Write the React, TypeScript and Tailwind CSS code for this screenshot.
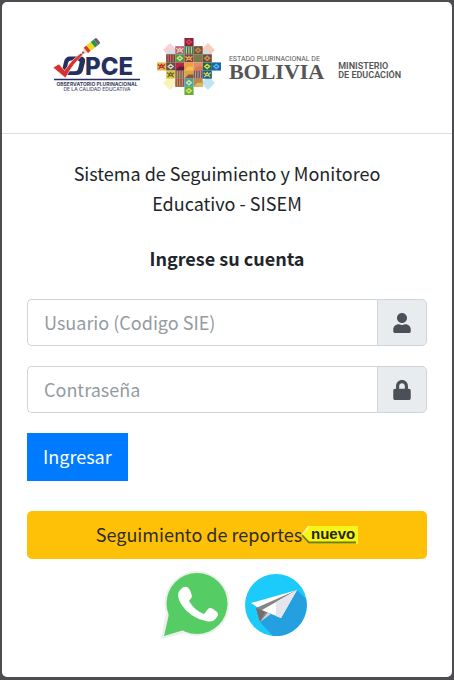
import React from "react";
import { FaLock, FaUser } from "react-icons/fa";

function OpceLogo() {
  return (
    <svg viewBox="0 0 90 56" className="h-[56px] w-[90px] shrink-0" role="img" aria-label="OPCE">
      <path d="M17 18.500H27Q33 18.500 32 24L30 32Q29 37 23 37H14Q8 37 9 32L11 24Q12 18.500 17 18.500ZM18 22.500Q15.500 22.500 15 25L13.800 31Q13.500 33.200 16 33.200H22Q24.500 33.200 25 31L26.500 25Q27 22.500 24.500 22.500Z" fillRule="evenodd" fill="#26305f" />
      <path d="M0 29.500 6 26 11.500 32.500Q18 22 28 15L30 16.500Q19 27 12.500 40Z" fill="#d9302f" stroke="#fff" strokeWidth="0.600" />
      <g transform="translate(29 15.500) rotate(-39)">
        <path d="M0 0 5-3.500V3.500Z" fill="#f1d9ae" />
        <path d="M0 0 2-1.400V1.400Z" fill="#333" />
        <path d="M5-3.500H8.500V3.500H5Z" fill="#d83a2c" />
        <path d="M8.500-3.500H14V3.500H8.500Z" fill="#f0d91f" />
        <path d="M14-3.500H18V3.500H14Z" fill="#2f9448" />
        <path d="M18-3.500H19.500Q21-3.500 21-2V2Q21 3.500 19.500 3.500H18Z" fill="#705a70" />
      </g>
      <text x="32" y="37" fontSize="24" fontWeight="800" fill="#26305f" className="font-['Inter',sans-serif]">PCE</text>
      <path d="M1 41.500H87" stroke="#26305f" strokeWidth="1.300" />
      <text x="44" y="48" textAnchor="middle" fontSize="5" fontWeight="700" fill="#343b62" className="font-['Inter',sans-serif]">OBSERVATORIO PLURINACIONAL</text>
      <text x="44" y="53" textAnchor="middle" fontSize="5" fontWeight="500" fill="#4b5070" className="font-['Inter',sans-serif]">DE LA CALIDAD EDUCATIVA</text>
    </svg>
  );
}

type Tile = [col: number, row: number, base: string, accent: string, motif: number];

const tiles: Tile[] = [
  [3, 0, "#8e2034", "#d0485a", 0],
  [2, 1, "#b7657c", "#e9d3ae", 1],
  [3, 1, "#387b55", "#d9c6a0", 2],
  [4, 1, "#7d5036", "#b98d51", 0],
  [1, 2, "#82364a", "#c58a49", 2],
  [2, 2, "#4d9a4b", "#d7dd8b", 0],
  [3, 2, "#8c3a42", "#d8b04c", 1],
  [4, 2, "#4e8a52", "#d2543f", 2],
  [5, 2, "#7d4a37", "#c2985d", 0],
  [0, 3, "#e6b84b", "#b9292b", 1],
  [1, 3, "#5d5148", "#dfd5c3", 0],
  [2, 3, "#b52743", "#5d1d34", 3],
  [3, 3, "#ee9d3d", "#f6bd54", 3],
  [4, 3, "#e68a66", "#e0784f", 3],
  [5, 3, "#22694a", "#d8dc4c", 0],
  [6, 3, "#1763a9", "#59b6df", 0],
  [1, 4, "#e2c93c", "#5c643b", 1],
  [2, 4, "#826051", "#c5a27d", 2],
  [3, 4, "#dba43e", "#8f5438", 3],
  [4, 4, "#75566b", "#c49c76", 2],
  [5, 4, "#175f8f", "#e1d34e", 1],
  [2, 5, "#91503f", "#d29b5e", 2],
  [3, 5, "#37a6b8", "#e4e28b", 0],
  [4, 5, "#bf8a41", "#e0b869", 3],
  [3, 6, "#66ab3d", "#dce24b", 0],
];

function Motif({ kind, color }: { kind: number; color: string }) {
  if (kind === 0)
    return <path d="M4.500 1 8 4 4.500 7 1 4ZM4.500 3 3 4 4.500 5 6 4Z" fillRule="evenodd" fill={color} />;
  if (kind === 1)
    return <path d="M1 2 3 4 4.500 2 6 4 8 2M1.500 6.500 3 5H6L7.500 6.500" fill="none" stroke={color} strokeWidth="1.200" />;
  if (kind === 2) return <path d="M2 .5V7.500M4.500 .5V7.500M7 .5V7.500" stroke={color} strokeWidth="1" />;
  return <path d="M0 8 4 4H9V8Z" fill={color} />;
}

function ChakanaLogo() {
  return (
    <svg viewBox="0 0 64 57" className="h-[57px] w-[64px] shrink-0" aria-hidden="true">
      <path d="M13 5 20 12 13 19 6 12Z" fill="#f8d1d2" />
      <path d="M51 5 58 12 51 19 44 12Z" fill="#f8ccbf" />
      <path d="M13 38 20 45 13 52 6 45Z" fill="#f8f3b7" />
      <path d="M51 38 58 45 51 52 44 45Z" fill="#c1e5ef" />
      <path d="M9 17 15 11 21 17ZM43 17 49 11 55 17Z" fill="#c8e3e4" />
      {tiles.map(([col, row, base, accent, motif]) => (
        <g key={`${col}-${row}`} transform={`translate(${col * 9.14} ${row * 8.14})`}>
          <rect width="9.140" height="8.140" fill={base} />
          <Motif kind={motif} color={accent} />
        </g>
      ))}
    </svg>
  );
}

function WhatsAppIcon() {
  return (
    <svg viewBox="0 0 68 68" className="size-[68px]" aria-hidden="true">
      <g fill="#ecefec">
        <circle cx="36" cy="32.500" r="32.500" />
        <path d="M5 42 0 68 24 62Z" />
      </g>
      <g fill="#55cd64">
        <circle cx="36" cy="32.500" r="30.500" />
        <path d="M8 43 3 65 23 59Z" />
      </g>
      <path d="M20 18Q23 15 26 16Q29 17 31 25Q31 27 28 30Q34 40 43 43L47 38Q49 36 52 38L56 41Q58 43 56 46Q52 52 45 50Q29 47 20 33Q14 23 20 18Z" fill="#fff" />
    </svg>
  );
}

function TelegramIcon() {
  return (
    <svg viewBox="0 0 62 62" className="size-[62px]" aria-hidden="true">
      <circle cx="31" cy="31" r="31" fill="#1dcbfb" />
      <path d="M52 16 61 25A31 31 0 0 1 28 62L15 48Z" fill="#249fe0" />
      <path d="M6 29 52 16 15 35Z" fill="#fff" />
      <path d="M11 34 52 16 15 48Z" fill="#858585" />
      <path d="M11 34 20 38 15 48Z" fill="#6e6e6e" />
      <path d="M17 36 52 16 36 44Z" fill="#fff" />
      <path d="M31 28 52 16 36 44 31 42Z" fill="#e4e5ed" />
      <path d="M15 48 23 38 26 40Z" fill="#cfcfcf" />
    </svg>
  );
}

function NewTag() {
  return (
    <svg viewBox="0 0 56 18" className="h-[18px] w-[56px]">
      <path d="M7 0H56V18H7L0 9Z" fill="#f5f51a" />
      <path d="M0 9 7 0" stroke="#fbf6a0" strokeWidth="1.500" />
      <path d="M0 9 7 16.500H54" fill="none" stroke="#77780a" strokeWidth="1.800" />
      <text x="9" y="13" fontSize="15" fontWeight="700" fill="#252500" className="font-['Liberation_Sans',sans-serif]">nuevo</text>
    </svg>
  );
}

interface FieldProps {
  id: string;
  type: string;
  label: string;
  icon: React.ReactNode;
}

function Field({ id, type, label, icon }: FieldProps) {
  return (
    <div className="flex h-[47px]">
      <input
        id={id}
        type={type}
        aria-label={label}
        placeholder={label}
        className="min-w-0 flex-1 rounded-l-[5px] border border-r-0 border-[#ced4da] bg-white px-4 pb-0.5 text-[#495057] outline-none placeholder:text-[#939ba2]"
      />
      <label
        htmlFor={id}
        className="flex w-[50px] items-center justify-center rounded-r-[5px] border border-[#ced4da] bg-[#e9ecef] text-xl text-[#495057]"
      >
        {icon}
      </label>
    </div>
  );
}

export default function App() {
  return (
    <div className="min-h-screen bg-[#4d4d51] px-[2px] pt-[2px] pb-[3px] font-['Noto_Sans_CJK_SC',sans-serif] text-lg text-[#212529]">
      <main className="flex min-h-[calc(100vh-5px)] flex-col rounded-[5px] bg-white">
        <header className="flex items-start justify-center border-b border-[#dcdddf] px-5 pt-9 pb-[38px]">
          <OpceLogo />
          <div className="ml-3.5">
            <ChakanaLogo />
          </div>
          <div className="ml-2 pt-[17px] text-[#555]">
            <p className="font-['Roboto',sans-serif] text-[7px] leading-[8px] whitespace-nowrap">ESTADO PLURINACIONAL DE</p>
            <p className="font-['Liberation_Serif',serif] text-[22px] leading-[18px] font-bold">BOLIVIA</p>
          </div>
          <p className="ml-3.5 pt-6 font-['Roboto',sans-serif] text-[9px] leading-[9px] font-semibold whitespace-nowrap text-[#555]">
            MINISTERIO
            <br />
            DE EDUCACIÓN
          </p>
        </header>

        <div className="flex flex-col px-[25px] pt-6 pb-9">
          <h1 className="mx-auto max-w-[340px] text-center leading-[30px]">
            Sistema de Seguimiento y Monitoreo Educativo - SISEM
          </h1>
          <h2 className="mt-[25px] text-center leading-[30px] font-bold">Ingrese su cuenta</h2>

          <form className="mt-[26px] flex flex-col items-stretch gap-5" onSubmit={(e) => e.preventDefault()}>
            <Field id="usuario" type="text" label="Usuario (Codigo SIE)" icon={<FaUser />} />
            <Field id="clave" type="password" label="Contraseña" icon={<FaLock />} />
            <button type="submit" className="h-12 self-start bg-[#007bff] px-4 pb-0.5 text-white">
              Ingresar
            </button>
          </form>

          <a href="#reportes" className="mt-[30px] flex h-12 items-center justify-center rounded-[5px] bg-[#ffc107] text-[#2f2c20]">
            <span className="pb-0.5">Seguimiento de reportes</span>
            <NewTag />
          </a>

          <nav className="mt-3 flex items-center justify-center gap-4 pl-3.5">
            <a href="#whatsapp" aria-label="WhatsApp">
              <WhatsAppIcon />
            </a>
            <a href="#telegram" aria-label="Telegram">
              <TelegramIcon />
            </a>
          </nav>
        </div>
      </main>
    </div>
  );
}
